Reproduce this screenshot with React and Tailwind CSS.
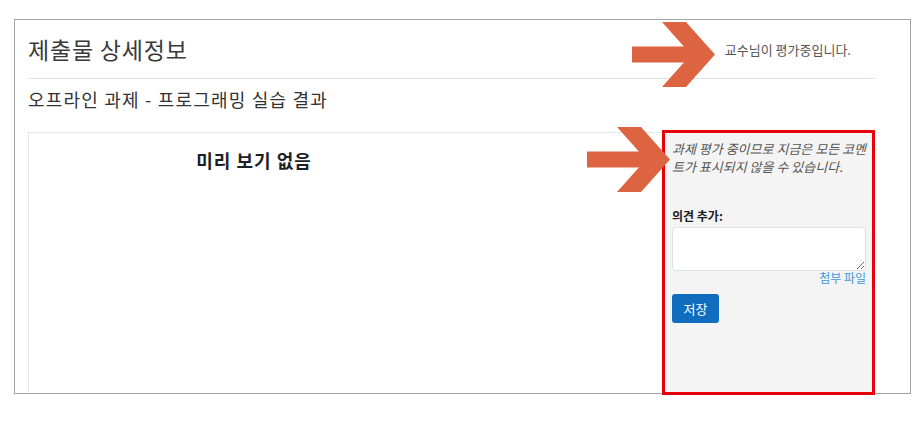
function Arrow({ className }) {
  return (
    <svg className={className} viewBox="0 0 83 65" width="83" height="65">
      <rect x="0" y="24.5" width="64" height="16" fill="#dc6441" />
      <polygon points="30,0 54,0 83,32.5 54,65 30,65 59,32.5" fill="#dc6441" />
    </svg>
  );
}

export default function App() {
  return (
    <div className="relative w-[918px] h-[422px] bg-white pt-[19px] pl-[14px] font-['Noto_Sans_CJK_KR','Noto_Sans',sans-serif]">
      {/* FRAME */}
      <div className="w-[897px] h-[375px] border border-[#a3a3a3] pl-[13px] pr-[35px]">
        {/* HEADER */}
        <div className="h-[59px] flex items-center justify-between border-b border-[#dee2e6]">
          <h2 className="text-[23px] leading-[30px] tracking-[0.8px] text-[#3a3a3a]">제출물 상세정보</h2>
          <span className="pr-[24px] pt-[2px] text-[13px] text-[#555]">교수님이 평가중입니다.</span>
        </div>

        <h3 className="mt-[8px] text-[18px] leading-[24px] tracking-[1.2px] text-[#333]">
          오프라인 과제 - 프로그래밍 실습 결과
        </h3>

        {/* SUBMISSION BOX */}
        <div className="mt-[21px] h-[261px] flex border-l border-t border-[#e6e6e6]">
          <div className="flex-1">
            <div className="w-[450px] pt-[14px] text-center text-[18px] leading-[26px] tracking-[1px] font-bold text-[#1d2125]">
              미리 보기 없음
            </div>
          </div>

          {/* COMMENTS */}
          <div className="relative w-[213px] bg-[#f4f4f4] pl-[10px] pr-[9px] pt-[7px]">
            <p className="text-[13px] leading-[18px] italic text-[#555]">
              과제 평가 중이므로 지금은 모든 코멘
              <br />
              트가 표시되지 않을 수 있습니다.
            </p>
            <div className="mt-[31px] text-[12px] leading-[18px] font-bold text-[#1d2125]">의견 추가:</div>
            <textarea className="block mt-[2px] w-full h-[44px] bg-white border border-[#dee2e6] rounded-[4px]" />
            <div className="text-right text-[12px] leading-[14px] text-[#3d97d8]">첨부 파일</div>
            <button className="mt-[9px] w-[47px] h-[29px] rounded-[3px] bg-[#0f6cbf] text-white text-[13px]">
              저장
            </button>

            {/* ANNOTATION */}
            <span className="pointer-events-none absolute -top-[3px] -bottom-[2px] left-0 right-0 border-[3px] border-[#e8000b]" />
          </div>
        </div>
      </div>

      <Arrow className="absolute left-[632px] top-[22px]" />
      <Arrow className="absolute left-[587px] top-[127px]" />
    </div>
  );
}
